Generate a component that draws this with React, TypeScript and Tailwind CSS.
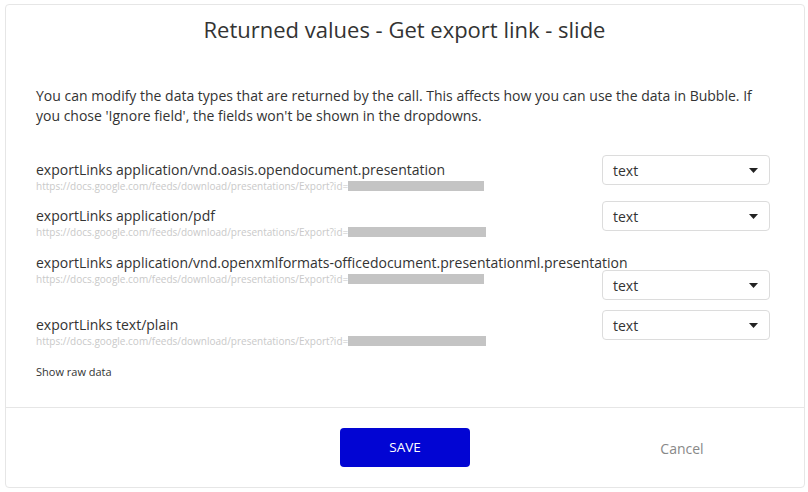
import React from 'react';

// 返回值行数据
type FieldRow = {
  label: string;
  redactWidth: number;
  wrap?: boolean;
};

const ROWS: FieldRow[] = [
  { label: 'exportLinks application/vnd.oasis.opendocument.presentation', redactWidth: 136 },
  { label: 'exportLinks application/pdf', redactWidth: 138 },
  {
    label: 'exportLinks application/vnd.openxmlformats-officedocument.presentationml.presentation',
    redactWidth: 136,
    wrap: true,
  },
  { label: 'exportLinks text/plain', redactWidth: 138 },
];

const URL_PREFIX = 'https://docs.google.com/feeds/download/presentations/Export?id=';

const TypeSelect = () => (
  <div className="w-[168px] h-[30px] shrink-0 rounded-[4px] border border-[#dcdcdc] bg-white flex items-center justify-between pl-[10px] pr-[10px]">
    <span className="text-[14px] text-[#333]">text</span>
    <svg width="9" height="5" viewBox="0 0 9 5" className="mr-[1px]">
      <path d="M0 0h9L4.5 5z" fill="#222" />
    </svg>
  </div>
);

const UrlLine = ({ redactWidth }: { redactWidth: number }) => (
  <div className="flex items-center h-[12px]">
    <span className="text-[10px] leading-[12px] text-[#c9c9c9] whitespace-nowrap">{URL_PREFIX}</span>
    <span className="h-[10px] bg-[#c4c4c4]" style={{ width: redactWidth }} />
  </div>
);

const Row = ({ row, className }: { row: FieldRow; className: string }) => {
  if (row.wrap) {
    return (
      <div className={className}>
        <div className="text-[14px] leading-[20px] text-[#333] whitespace-nowrap">{row.label}</div>
        <div className="flex items-start justify-between">
          <UrlLine redactWidth={row.redactWidth} />
          <div className="-mt-[3px]">
            <TypeSelect />
          </div>
        </div>
      </div>
    );
  }
  return (
    <div className={`flex items-start justify-between ${className}`}>
      <div className="mt-[5px]">
        <div className="text-[14px] leading-[20px] text-[#333] whitespace-nowrap">{row.label}</div>
        <UrlLine redactWidth={row.redactWidth} />
      </div>
      <TypeSelect />
    </div>
  );
};

export default function App() {
  return (
    <div className="w-[808px] h-[492px] bg-white pt-[4px] pl-[5px]" style={{ fontFamily: '"Open Sans", "Liberation Sans", sans-serif' }}>
      <div className="w-[800px] h-[484px] rounded-[4px] border border-[#e6e6e6] bg-white flex flex-col">
        {/* 标题与说明 */}
        <div className="pl-[30px] pr-[34px] flex-1">
          <h1 className="mt-[9px] pl-[3px] text-center text-[22px] leading-[30px] text-[#333]">
            Returned values - Get export link - slide
          </h1>
          <p className="mt-[42px] text-[14px] leading-[20px] text-[#333]">
            You can modify the data types that are returned by the call. This affects how you can use the data in Bubble. If you chose 'Ignore field', the fields won't be shown in the dropdowns.
          </p>

          {/* 字段列表 */}
          <Row row={ROWS[0]} className="mt-[29px]" />
          <Row row={ROWS[1]} className="mt-[9px]" />
          <Row row={ROWS[2]} className="mt-[15px]" />
          <Row row={ROWS[3]} className="mt-[10px]" />

          <div className="mt-[18px] text-[11px] leading-[14px] text-[#333]">Show raw data</div>
        </div>

        {/* 底部按钮 */}
        <div className="border-t border-[#e6e6e6] h-[80px] grid grid-cols-3 items-center">
          <div />
          <div className="flex justify-center">
            <button className="w-[130px] h-[39px] rounded-[4px] bg-[#0205d3] text-white text-[13.5px]">SAVE</button>
          </div>
          <div className="flex justify-center pl-[22px] pt-[2px]">
            <span className="text-[14px] text-[#888]">Cancel</span>
          </div>
        </div>
      </div>
    </div>
  );
}
